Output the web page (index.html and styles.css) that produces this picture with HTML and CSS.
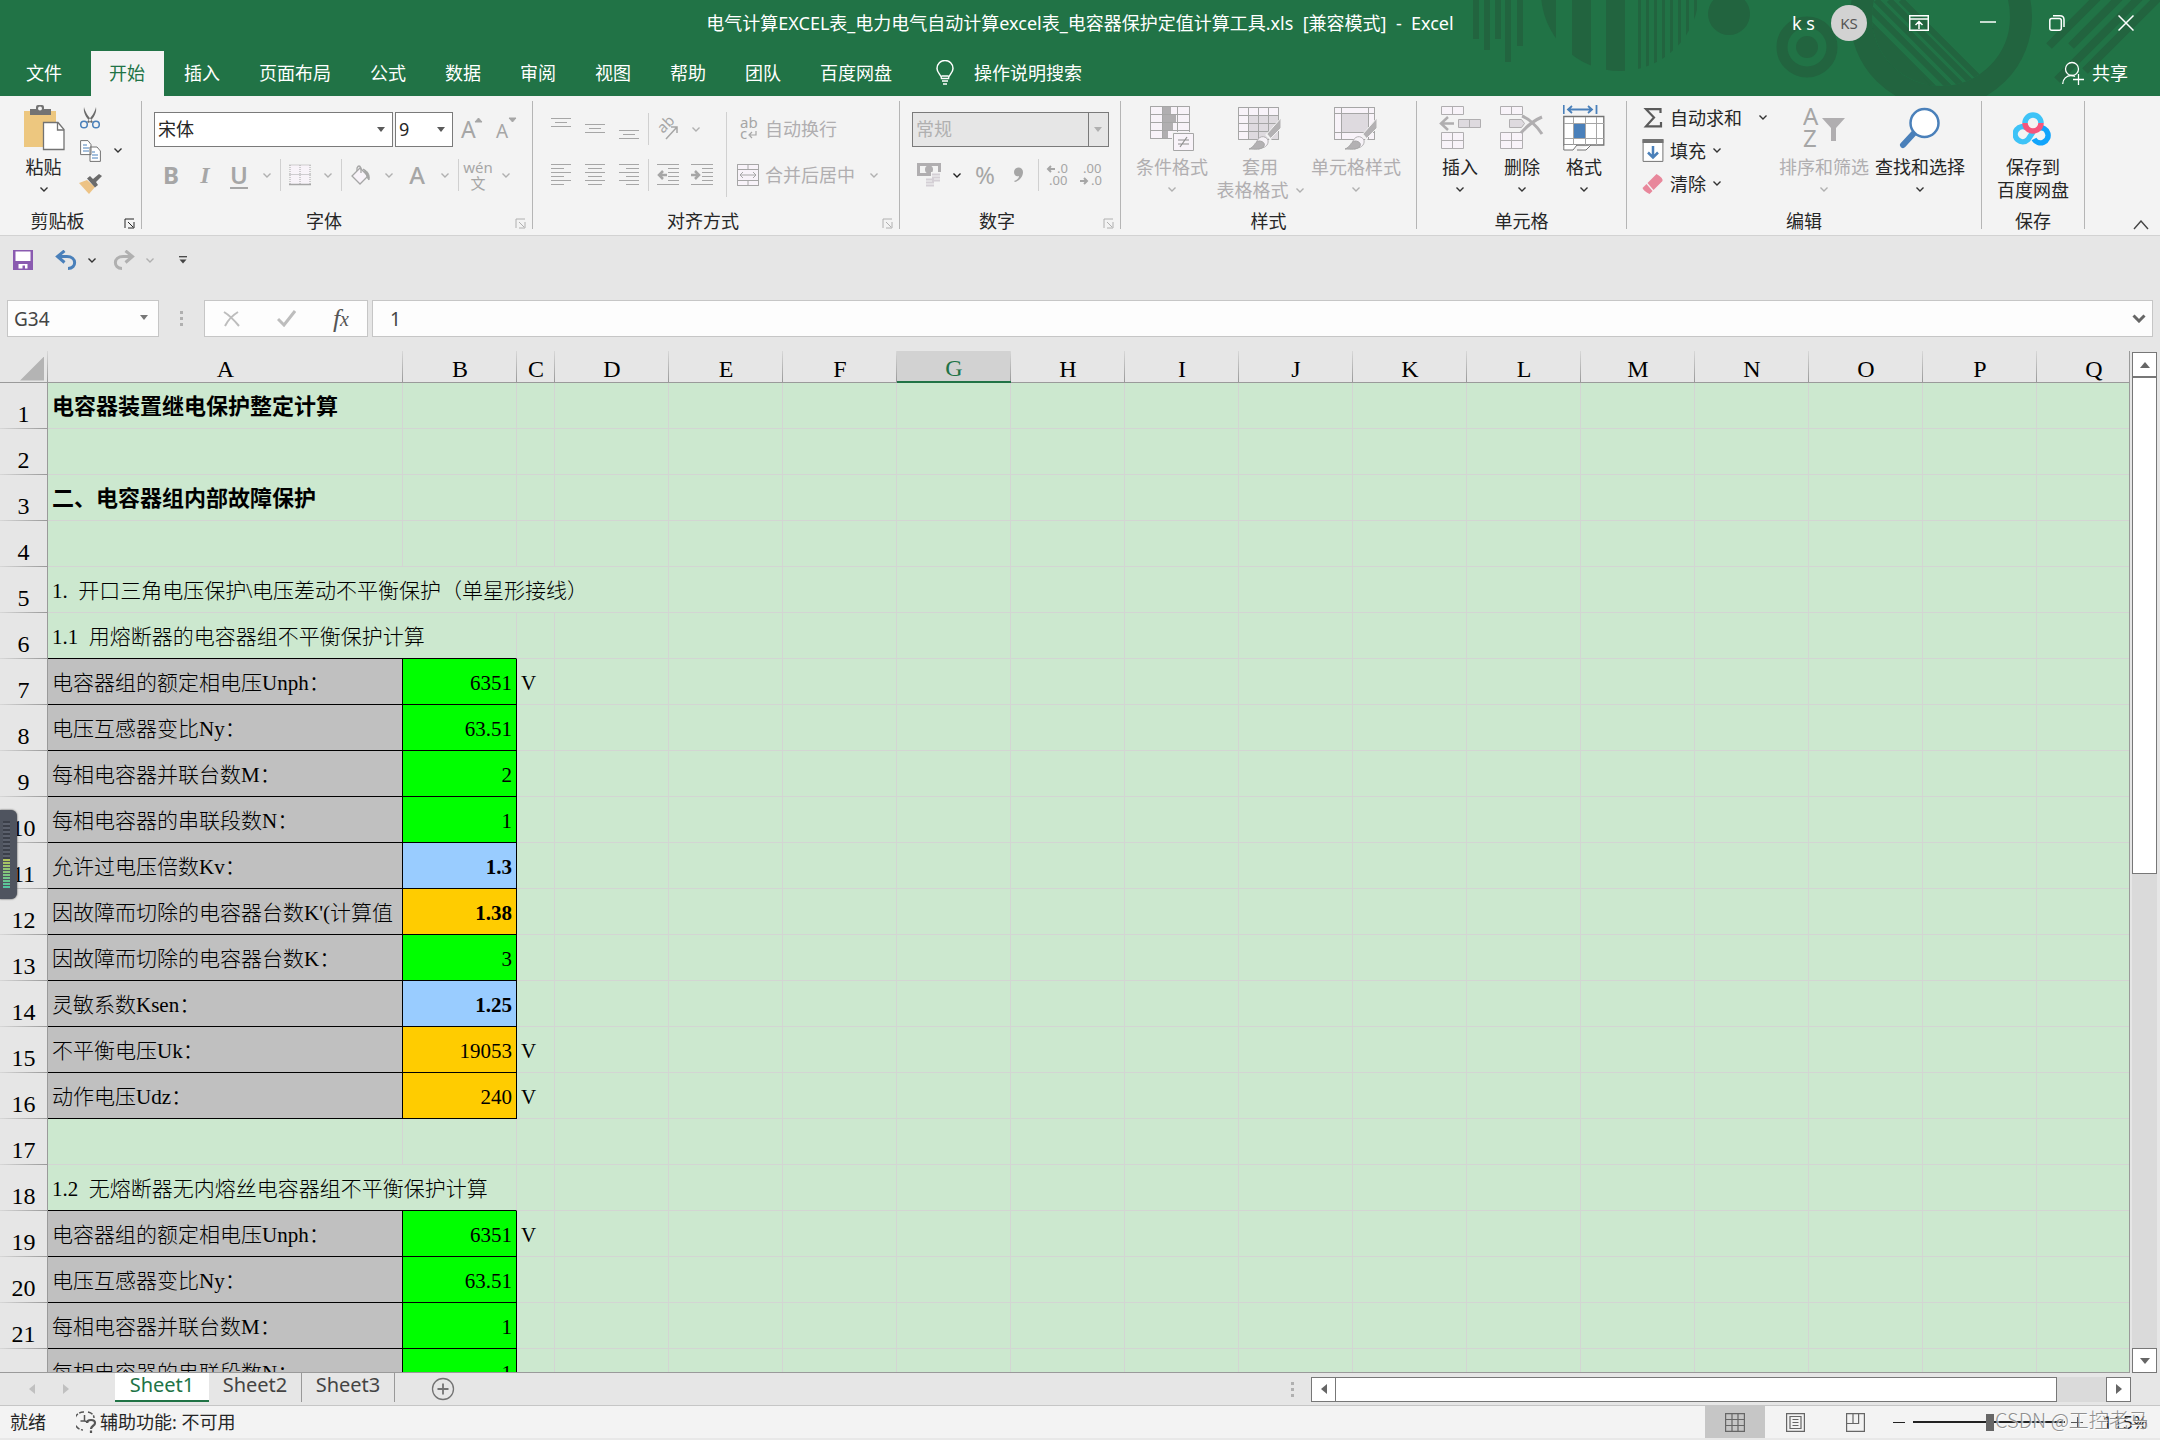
FILE: index.html
```html
<!DOCTYPE html>
<html lang="zh-CN">
<head>
    <meta charset="UTF-8">
    <title>电气计算EXCEL表 - Excel</title>
    <link rel="stylesheet" href="styles.css">
</head>
<body>
    <svg class="defs" aria-hidden="true">
        <symbol id="chevron" viewBox="0 0 8 5"><path d="M.5 .5 4 4 7.5 .5" fill="none" stroke="currentColor" stroke-width="1.4"/></symbol>
        <symbol id="launcher" viewBox="0 0 11 11"><path d="M1 10V1h9M4 4l5 5M10 4v6H4" fill="none" stroke="currentColor"/></symbol>
        <symbol id="brush" viewBox="0 0 34 34"><path d="M33 2v10L22 23l-4-4z" fill="#b3b1b3" stroke="#f3f3f3"/><path d="M18 18l5 6" stroke="#f3f3f3" stroke-width="2"/><path d="M8 28c2-9 9-9 12-4 1 6-4 8-10 9z" fill="#f6f2f7" stroke="#b3b1b3"/><path d="M1 33c6-2 5-7 10-8 5 0 7 4 4 6-3 3-8 2-14 2z" fill="#b3b1b3"/></symbol>
    </svg>

    <header class="app-header">
        <svg class="art" width="700" height="96" viewBox="1460 0 700 96" aria-hidden="true">
            <defs>
                <clipPath id="disc"><circle cx="1620" cy="-8" r="79"/></clipPath>
                <clipPath id="hole"><circle cx="1941" cy="17" r="69"/></clipPath>
            </defs>
            <g fill="#22643f">
                <path d="M1473 0h6v39h-6zM1484 0h6v50h-6zM1495 0h6v39h-6zM1505 0h6v62h-6zM1517 0h6v46h-6z"/>
                <path clip-path="url(#disc)" d="M1541 0h15v75h-15zM1572 0h19v75h-19zM1606 0h19v75h-19zM1638 0h3v75h-3zM1646 0h3v75h-3zM1654 0h3v75h-3zM1662 0h3v75h-3zM1670 0h3v75h-3zM1678 0h3v75h-3zM1686 0h3v75h-3zM1694 0h3v75h-3z"/>
                <circle cx="1729" cy="14" r="21"/>
                <circle cx="1807" cy="47" r="11"/>
            </g>
            <g fill="none" stroke="#22643f">
                <circle cx="1807" cy="47" r="25" stroke-width="11"/>
                <circle cx="1941" cy="17" r="80" stroke-width="22"/>
                <g clip-path="url(#hole)" stroke-width="6">
                    <path d="M1846 0l100 100M1862 0l100 100M1876 0l100 100M1889 0l100 100M1901 0l100 100"/>
                    <path d="M1866 30l66 66" stroke-width="14"/>
                </g>
                <path stroke-width="8" d="M2049 46l50-50M2071 46l50-50M2057 80l84-84M2085 71l76-76"/>
            </g>
        </svg>
        <div class="title-bar">
            <span></span>
            <h1>电气计算EXCEL表_电力电气自动计算excel表_电容器保护定值计算工具.xls&nbsp; [兼容模式]&nbsp; -&nbsp; Excel</h1>
            <div class="window-tools">
                <span class="user">k s</span>
                <span class="avatar">KS</span>
                <button aria-label="功能区显示选项"><svg width="20" height="16" viewBox="0 0 20 16"><path d="M.7.7h18.6v14.6H.7zM1 4h18M10 14V7M6.500 10 10 6.500l3.500 3.500" fill="none" stroke="#fff" stroke-width="1.500"/></svg></button>
                <button aria-label="最小化"><svg width="16" height="16" viewBox="0 0 16 16"><path d="M0 7h16" stroke="#fff" stroke-width="1.500"/></svg></button>
                <button aria-label="还原"><svg width="16" height="16" viewBox="0 0 16 16"><path d="M4 .8h7q4 0 4 4V12" fill="none" stroke="#fff" stroke-width="1.500"/><rect x=".8" y="3.500" width="11.500" height="11.700" rx="2" fill="none" stroke="#fff" stroke-width="1.500"/></svg></button>
                <button aria-label="关闭"><svg width="16" height="16" viewBox="0 0 16 16"><path d="M.5.5l15 15M15.500.5l-15 15" stroke="#fff" stroke-width="1.500"/></svg></button>
            </div>
        </div>
        <nav class="tabs">
            <a href="#file" class="file">文件</a>
            <a href="#home" class="active">开始</a>
            <a href="#insert">插入</a>
            <a href="#layout">页面布局</a>
            <a href="#formulas">公式</a>
            <a href="#data">数据</a>
            <a href="#review">审阅</a>
            <a href="#view">视图</a>
            <a href="#help">帮助</a>
            <a href="#team">团队</a>
            <a href="#netdisk">百度网盘</a>
            <a href="#tellme" class="tell-me">
                <svg width="18" height="25" viewBox="0 0 18 25"><path d="M5.500 18.500c0-4-4.500-5-4.500-10a8 8 0 0 1 16 0c0 5-4.500 6-4.500 10zM5.500 16h7M6 21h6M7 24h4" fill="none" stroke="#fff" stroke-width="1.500"/></svg>
                操作说明搜索
            </a>
            <a href="#share" class="share">
                <svg width="22" height="24" viewBox="0 0 22 24"><circle cx="10" cy="8" r="6.500" fill="none" stroke="#fff" stroke-width="1.300"/><path d="M.7 23c0-5 4-8.500 8.300-8.500 2 0 3 .3 4 1M16.500 13v11M11 18.500h11" fill="none" stroke="#fff" stroke-width="1.300"/></svg>
                共享
            </a>
        </nav>
    </header>

    <section class="ribbon">
        <div class="group clipboard">
            <div class="group-body">
                <button class="big paste">
                    <span class="icon"><svg width="42" height="46" viewBox="0 0 42 46"><path d="M1 6h32v36H1z" fill="#edc77f"/><path d="M7 10V4h6V2q0-2 2-2h4q2 0 2 2v2h7v6z" fill="#737373"/><circle cx="17" cy="3.500" r="2" fill="#f3f3f3"/><path d="M20.500 17.500H35l6 7v20H20.500z" fill="#fff" stroke="#737373" stroke-width="1.300"/><path d="M34.500 18v7H41" fill="none" stroke="#737373" stroke-width="1.300"/></svg></span>
                    粘贴
                    <svg class="chev"><use href="#chevron"/></svg>
                </button>
                <div class="stack">
                    <div class="row">
                        <button class="tool" aria-label="剪切"><svg width="20" height="22" viewBox="0 0 20 22"><path d="M4 0c1 5 4 9 9 15l-2 1C6 10 3 6 4 0zM16 0c-1 5-4 9-9 15l2 1C14 10 17 6 16 0z" fill="#6b6b6b"/><circle cx="4" cy="17.500" r="3.300" fill="none" stroke="#4a80ba" stroke-width="1.500"/><circle cx="16" cy="17.500" r="3.300" fill="none" stroke="#4a80ba" stroke-width="1.500"/></svg></button>
                    </div>
                    <div class="row">
                        <button class="tool" aria-label="复制"><svg width="21" height="22" viewBox="0 0 21 22"><path d="M.6.6H8l3 4v10H.6zM10 7h7l3.400 4v10.400H10z" fill="#fff" stroke="#737373"/><path d="M3 5h4M3 8h6M3 11h6M12 12h3M12 15h6M12 18h6" stroke="#4a80ba"/></svg></button>
                        <svg class="chev"><use href="#chevron"/></svg>
                    </div>
                    <div class="row">
                        <button class="tool" aria-label="格式刷"><svg width="23" height="20" viewBox="0 0 23 20"><path d="M0 9 8 6l8 7-6 7z" fill="#edc385"/><path d="M8 4.500 11 2l3 3 6-5 3 2-6 6 2 3-3 2.500z" fill="#6b6b6b"/></svg></button>
                    </div>
                </div>
            </div>
            <div class="group-label"><span>剪贴板</span><svg class="launch"><use href="#launcher"/></svg></div>
        </div>

        <div class="group font off">
            <div class="group-body rows">
                <div class="row">
                    <span class="combo font-name"><select aria-label="字体"><option>宋体</option></select></span>
                    <span class="combo font-size"><select aria-label="字号"><option>9</option></select></span>
                    <button class="tool" aria-label="增大字号"><svg width="22" height="24" viewBox="0 0 22 24"><text x="0" y="21" class="ic" font-size="23">A</text><path d="M14 5l3.500-4L21 5z" fill="#a6a6a6"/></svg></button>
                    <button class="tool" aria-label="减小字号"><svg width="22" height="24" viewBox="0 0 22 24"><text x="1" y="21" class="ic" font-size="19">A</text><path d="M14 1l3.500 4L21 1z" fill="#a6a6a6"/></svg></button>
                </div>
                <div class="row">
                    <button class="tool glyph bold">B</button>
                    <button class="tool glyph italic">I</button>
                    <button class="tool glyph under">U</button>
                    <svg class="chev"><use href="#chevron"/></svg>
                    <i class="sep"></i>
                    <button class="tool" aria-label="边框"><svg width="22" height="22" viewBox="0 0 22 22"><path d="M1 1h20v19H1z" fill="#f8f3f9" stroke="none"/><path d="M.5 1H22M.5 10.500H22M1 1v20M11 1v20M21 1v20" stroke="#a6a6a6" stroke-dasharray="1 1"/><path d="M0 20.500h22" stroke="#a6a6a6" stroke-width="1.500"/></svg></button>
                    <svg class="chev"><use href="#chevron"/></svg>
                    <i class="sep"></i>
                    <button class="tool" aria-label="填充颜色"><svg width="20" height="20" viewBox="0 0 20 20"><path d="M9 3 1 11l8 8 8-8z" fill="#f8f3f9" stroke="#a6a6a6" stroke-width="1.300"/><path d="M6 6V3q2-4 4 0v5" fill="none" stroke="#a6a6a6" stroke-width="1.300"/><path d="M12 4c5 2 7 6 6 11-2-1-2-6-6-11z" fill="#a6a6a6"/></svg></button>
                    <svg class="chev"><use href="#chevron"/></svg>
                    <button class="tool glyph color">A</button>
                    <svg class="chev"><use href="#chevron"/></svg>
                    <i class="sep"></i>
                    <button class="tool phonetic"><span>wén</span><span>文</span></button>
                    <svg class="chev"><use href="#chevron"/></svg>
                </div>
            </div>
            <div class="group-label"><span>字体</span><svg class="launch"><use href="#launcher"/></svg></div>
        </div>

        <div class="group align off">
            <div class="group-body">
                <div class="rows">
                    <div class="row">
                        <button class="tool" aria-label="顶端对齐"><svg width="20" height="22" viewBox="0 0 20 22"><path d="M0 .5h20M4 4.500h12M0 8.500h20"/></svg></button>
                        <button class="tool" aria-label="垂直居中"><svg width="20" height="22" viewBox="0 0 20 22"><path d="M0 6.500h20M4 10.500h12M0 14.500h20"/></svg></button>
                        <button class="tool" aria-label="底端对齐"><svg width="20" height="22" viewBox="0 0 20 22"><path d="M0 12.500h20M4 16.500h12M0 20.500h20"/></svg></button>
                        <i class="sep"></i>
                        <button class="tool" aria-label="方向"><svg width="22" height="22" viewBox="0 0 22 22"><text x="0" y="0" class="ic" font-size="15" transform="translate(6 16) rotate(-45)">ab</text><path d="M9 21 20 9M14 9h6v6" stroke-width="1.500"/></svg></button>
                        <svg class="chev"><use href="#chevron"/></svg>
                    </div>
                    <div class="row">
                        <button class="tool" aria-label="左对齐"><svg width="20" height="22" viewBox="0 0 20 22"><path d="M0 .5h20M0 4.500h13M0 8.500h20M0 12.500h13M0 16.500h20M0 20.500h13"/></svg></button>
                        <button class="tool" aria-label="居中"><svg width="20" height="22" viewBox="0 0 20 22"><path d="M0 .5h20M3 4.500h14M0 8.500h20M3 12.500h14M0 16.500h20M3 20.500h14"/></svg></button>
                        <button class="tool" aria-label="右对齐"><svg width="20" height="22" viewBox="0 0 20 22"><path d="M0 .5h20M7 4.500h13M0 8.500h20M7 12.500h13M0 16.500h20M7 20.500h13"/></svg></button>
                        <i class="sep"></i>
                        <button class="tool" aria-label="减少缩进量"><svg width="22" height="22" viewBox="0 0 22 22"><path d="M0 .5h22M11 4.500h11M11 8.500h11M11 12.500h11M11 16.500h11M0 20.500h22"/><path d="M10 11H2M6 7l-4 4 4 4" stroke-width="2.500"/></svg></button>
                        <button class="tool" aria-label="增加缩进量"><svg width="22" height="22" viewBox="0 0 22 22"><path d="M0 .5h22M11 4.500h11M11 8.500h11M11 12.500h11M11 16.500h11M0 20.500h22"/><path d="M0 11h8M4 7l4 4-4 4" stroke-width="2.500"/></svg></button>
                    </div>
                </div>
                <i class="sep tall"></i>
                <div class="rows">
                    <div class="row">
                        <button class="text-tool"><svg width="22" height="24" viewBox="0 0 22 24"><text x="3" y="11" class="ic" font-size="15">ab</text><text x="3" y="22" class="ic" font-size="15">c</text><path d="M19 14v4h-6M15 15l-3 3 3 3" stroke-width="1.200"/></svg>自动换行</button>
                    </div>
                    <div class="row">
                        <button class="text-tool"><svg width="22" height="22" viewBox="0 0 22 22"><path d="M.5.5h21v21H.5z" fill="#f8f3f9"/><path d="M.5.5h21v21H.5zM0 5.500h22M0 16.500h22M11 0v5.500M11 16.500V22M3 11h16M6 8l-3 3 3 3M16 8l3 3-3 3"/></svg>合并后居中</button>
                        <svg class="chev"><use href="#chevron"/></svg>
                    </div>
                </div>
            </div>
            <div class="group-label"><span>对齐方式</span><svg class="launch"><use href="#launcher"/></svg></div>
        </div>

        <div class="group number off">
            <div class="group-body rows">
                <div class="row">
                    <span class="combo disabled"><select aria-label="数字格式" disabled><option>常规</option></select></span>
                </div>
                <div class="row">
                    <button class="tool" aria-label="会计数字格式"><svg width="24" height="24" viewBox="0 0 24 24"><g stroke="none"><path d="M0 0h24v13H0z" fill="#b0aeb0"/><path d="M3 3h18v7H3z" fill="#f3f3f3"/><circle cx="12" cy="6.500" r="4" fill="#b0aeb0"/><path d="M14 9h10v12H8v-7h6z" fill="#f3f3f3"/></g><path d="M15 11.500h8M15 14.500h8M15 17.500h8M9 16.500h8M9 19.500h8M9 22.500h8" stroke="#d4cfd5" stroke-width="2"/></svg></button>
                    <svg class="chev dark"><use href="#chevron"/></svg>
                    <button class="tool glyph percent">%</button>
                    <button class="tool" aria-label="千位分隔样式"><svg width="12" height="16" viewBox="0 0 12 16"><path d="M1 5a4.500 4.500 0 1 1 9 0c0 5-4 9-8 10l-1-1c3-1 5-3 5-5-3 1-5-1-5-4z" fill="#a6a6a6" stroke="none"/></svg></button>
                    <i class="sep"></i>
                    <button class="tool" aria-label="增加小数位数"><svg width="24" height="24" viewBox="0 0 24 24"><text x="11" y="10" class="ic" font-size="13">.0</text><text x="3" y="22" class="ic" font-size="13">.00</text><path d="M9 6H2M5 3 2 6l3 3" stroke-width="2"/></svg></button>
                    <button class="tool" aria-label="减少小数位数"><svg width="24" height="24" viewBox="0 0 24 24"><text x="3" y="10" class="ic" font-size="13">.00</text><text x="11" y="22" class="ic" font-size="13">.0</text><path d="M0 18h7M4 15l3 3-3 3" stroke-width="2"/></svg></button>
                </div>
            </div>
            <div class="group-label"><span>数字</span><svg class="launch"><use href="#launcher"/></svg></div>
        </div>

        <div class="group styles off">
            <div class="group-body">
                <button class="big">
                    <span class="icon"><svg width="44" height="45" viewBox="0 0 44 45"><path d="M.5.5h39v32H.5z" fill="#f8f3f9"/><path d="M.5.5h39v32H.5zM0 8.500h40M0 16.500h40M0 24.500h40M12.500 0v33M27.500 0v33"/><path d="M13 1h8v7h-8zM13 9h13v7H13zM13 17h10v7H13zM13 25h5v7h-5z" fill="#b0aeb0" stroke="none"/><path d="M23.500 27.500h20v17h-20z" fill="#f8f3f9" stroke="#f3f3f3" stroke-width="3"/><path d="M23.500 27.500h20v17h-20z" fill="#f8f3f9"/><path d="M28 34h11M28 38h11M37 31l-7 10" stroke="#8f8f8f" stroke-width="1.200"/></svg></span>
                    条件格式
                    <svg class="chev"><use href="#chevron"/></svg>
                </button>
                <button class="big wide">
                    <span class="icon"><svg width="44" height="43" viewBox="0 0 44 43"><path d="M.5.5h40v32H.5z" fill="#f8f3f9"/><path d="M10 8h30v24H10z" fill="#dedadf" stroke="none"/><path d="M.5.5h40v32H.5zM0 8.500h40M0 16.500h40M0 24.500h40M10.500 0v33M20.500 0v33M30.500 0v33"/><use href="#brush" x="10" y="9" width="34" height="34"/></svg></span>
                    套用
                    <span class="line">表格格式<svg class="chev"><use href="#chevron"/></svg></span>
                </button>
                <button class="big wide">
                    <span class="icon"><svg width="44" height="43" viewBox="0 0 44 43"><path d="M.5.5h40v32H.5z" fill="#f8f3f9"/><path d="M7 7h27v18H7z" fill="#dedadf" stroke="none"/><path d="M.5.5h40v32H.5zM0 6.500h40M0 25.500h40M7.500 0v33M34.500 0v33"/><use href="#brush" x="10" y="9" width="34" height="34"/></svg></span>
                    单元格样式
                    <svg class="chev"><use href="#chevron"/></svg>
                </button>
            </div>
            <div class="group-label"><span>样式</span></div>
        </div>

        <div class="group cells">
            <div class="group-body">
                <button class="big">
                    <span class="icon"><svg width="44" height="44" viewBox="0 0 44 44" fill="#f8f3f9" stroke="#b0aeb0"><path d="M3.500.5h22v8h-22zM14.500.5v8M3.500 26.500h22v16h-22zM3.500 34.500h22M14.500 26.500v16"/><path d="M20.500 13.500h22v8h-22zM31.500 13.500v8" fill="#dedadf"/><path d="M16 17.500H3M10 11l-7 6.500 7 6.500" fill="none" stroke-width="2.500"/></svg></span>
                    插入
                    <svg class="chev"><use href="#chevron"/></svg>
                </button>
                <button class="big">
                    <span class="icon"><svg width="44" height="44" viewBox="0 0 44 44" fill="#f8f3f9" stroke="#b0aeb0"><path d="M.5.5h22v8h-22zM11.500.5v8M.5 26.500h22v16h-22zM.5 34.500h22M11.500 26.500v16"/><path d="M9.500 13.500h12l3 4-3 4h-12z" fill="#dedadf"/><path d="M22 10c6 2 15 10 20 18M42 11c-7 3-15 9-21 16" fill="none" stroke-width="3"/></svg></span>
                    删除
                    <svg class="chev"><use href="#chevron"/></svg>
                </button>
                <button class="big">
                    <span class="icon"><svg width="42" height="46" viewBox="0 0 42 46"><path d="M.8 11.500h40V40H.8z" fill="#fff" stroke="#737373" stroke-width="1.300"/><path d="M1 18.500h40M1 33.500h40M10.500 12v28M22.500 12v28M33.500 12v28" stroke="#a6a6a6"/><path d="M11 19h11v14H11z" fill="#4a80ba"/><path d="M.8 40v5H10l4-5M14 45h9l5-5" fill="#fff" stroke="#737373"/><path d="M.7 0v9M33.500 0v9M5 4.500h24M9 1 5 4.500 9 8M25 1l4 3.500L25 8" fill="none" stroke="#4a80ba" stroke-width="1.800"/></svg></span>
                    格式
                    <svg class="chev"><use href="#chevron"/></svg>
                </button>
            </div>
            <div class="group-label"><span>单元格</span></div>
        </div>

        <div class="group edit">
            <div class="group-body">
                <div class="stack edit-list">
                    <div class="row">
                        <button class="text-tool"><svg width="18" height="20" viewBox="0 0 18 20"><path d="M16.500 5V1.200H2L10 9.500 2 18.300h15V14" fill="none" stroke="#5a5a5a" stroke-width="2.200"/></svg>自动求和</button>
                        <svg class="chev far"><use href="#chevron"/></svg>
                    </div>
                    <div class="row">
                        <button class="text-tool"><svg width="21" height="23" viewBox="0 0 21 23"><path d="M.6.6h19.800v21.800H.6z" fill="#fff" stroke="#737373"/><path d="M0 0h21v4H0z" fill="#737373"/><path d="M10.500 7v11M5.500 13.500l5 5 5-5" fill="none" stroke="#4a80ba" stroke-width="2.500"/></svg>填充</button>
                        <svg class="chev"><use href="#chevron"/></svg>
                    </div>
                    <div class="row">
                        <button class="text-tool"><svg width="21" height="20" viewBox="0 0 21 20"><path d="M14 0q7 4 6 7L11 16 5 9zM4 10l6 7-3 3Q1 17 0 14z" fill="#e8879b"/></svg>清除</button>
                        <svg class="chev"><use href="#chevron"/></svg>
                    </div>
                </div>
                <button class="big wide off">
                    <span class="icon"><svg width="42" height="42" viewBox="0 0 42 42"><text x="0" y="18" class="ic" font-size="24">A</text><text x="0" y="40" class="ic" font-size="24">Z</text><path d="M19 11h23L33 21v13h-5V21z" fill="#b0aeb0" stroke="none"/></svg></span>
                    排序和筛选
                    <svg class="chev"><use href="#chevron"/></svg>
                </button>
                <button class="big wide">
                    <span class="icon"><svg width="42" height="42" viewBox="0 0 42 42"><path d="M16 25 4 38" stroke="#4a80ba" stroke-width="6" stroke-linecap="round"/><circle cx="25.500" cy="16" r="14" fill="#fff" stroke="#4a80ba" stroke-width="2.500"/></svg></span>
                    查找和选择
                    <svg class="chev"><use href="#chevron"/></svg>
                </button>
            </div>
            <div class="group-label"><span>编辑</span></div>
        </div>

        <div class="group save">
            <div class="group-body">
                <button class="big">
                    <span class="icon"><svg width="40" height="36" viewBox="0 0 40 36" fill="none" stroke-width="5.500"><path d="M20 22 15 29.500a7.500 7.500 0 1 1-1-11.500" stroke="#3ec3f7"/><path d="M21 29a7.500 7.500 0 1 0 5-11" stroke="#12a4fb"/><path d="M12 13a8 8 0 0 1 16 0" stroke="#3ec3f7"/><path d="M12 13a8 8 0 0 0 16 0" stroke="#f6557c"/></svg></span>
                    保存到
                    <span class="line">百度网盘</span>
                </button>
            </div>
            <div class="group-label"><span>保存</span></div>
        </div>
        <button class="collapse" aria-label="折叠功能区"><svg width="16" height="10" viewBox="0 0 16 10"><path d="M1 9l7-8 7 8" fill="none" stroke="#444" stroke-width="1.400"/></svg></button>
    </section>

    <div class="quick-bar">
        <button aria-label="保存"><svg width="20" height="20" viewBox="0 0 20 20"><path d="M0 0h20v20H0z" fill="#8a5bb0"/><path d="M2.500 1.500h15v9.500h-15zM5.500 14h9v4.500H12v-3H9.500v3h-4z" fill="#fff"/></svg></button>
        <button aria-label="撤消"><svg width="22" height="20" viewBox="0 0 22 20"><path d="M3 6.500h9c10 0 10 12 1 12" fill="none" stroke="#4a80ba" stroke-width="3"/><path d="M9.500.8 2.500 6.500l7 6" fill="none" stroke="#4a80ba" stroke-width="3"/></svg></button>
        <svg class="chev dark"><use href="#chevron"/></svg>
        <button aria-label="恢复"><svg width="22" height="20" viewBox="0 0 22 20"><path d="M19 6.500h-9c-10 0-10 12-1 12" fill="none" stroke="#b0b0b0" stroke-width="3"/><path d="M12.500.8l7 5.700-7 6" fill="none" stroke="#b0b0b0" stroke-width="3"/></svg></button>
        <svg class="chev pale"><use href="#chevron"/></svg>
        <button aria-label="自定义快速访问工具栏"><svg width="8" height="8" viewBox="0 0 8 8"><path d="M0 .7h8" stroke="#444" stroke-width="1.300"/><path d="M.5 3.500h7L4 7.500z" fill="#444"/></svg></button>
    </div>

    <div class="formula-bar">
        <span class="combo name-box"><input type="text" value="G34" aria-label="名称框"></span>
        <i class="dots"></i>
        <div class="fx-box">
            <button aria-label="取消"><svg width="17" height="16" viewBox="0 0 17 16"><path d="M1 1c5 3 10 8 15 14M15 1C10 4 5 9 2 15" fill="none" stroke="#bdbdbd" stroke-width="2"/></svg></button>
            <button aria-label="输入"><svg width="19" height="17" viewBox="0 0 19 17"><path d="M1 9l6 6L18 1" fill="none" stroke="#bdbdbd" stroke-width="3"/></svg></button>
            <button class="fx">f<small>x</small></button>
        </div>
        <div class="formula">
            <input type="text" value="1" aria-label="编辑栏">
            <svg width="14" height="9" viewBox="0 0 14 9"><path d="M1.500 1.500 7 7l5.500-5.500" fill="none" stroke="#666" stroke-width="3"/></svg>
        </div>
    </div>

    <main class="workspace">
        <div class="sheet">
            <table>
                <colgroup id="cols"></colgroup>
                <thead><tr id="colHeads"></tr></thead>
                <tbody id="cells"></tbody>
            </table>
        </div>
        <div class="v-scroll">
            <button aria-label="向上滚动"><i class="tri up"></i></button>
            <div class="thumb"></div>
            <button aria-label="向下滚动"><i class="tri down"></i></button>
        </div>
        <div class="meter"><i class="level idle"></i><i class="level live"></i></div>
    </main>

    <div class="sheet-bar">
        <div class="sheet-nav"><i class="tri left"></i><i class="tri right"></i></div>
        <nav class="sheet-tabs">
            <a href="#sheet1" class="active">Sheet1</a>
            <a href="#sheet2">Sheet2</a>
            <a href="#sheet3">Sheet3</a>
        </nav>
        <button class="add" aria-label="新工作表"><svg width="24" height="24" viewBox="0 0 24 24"><circle cx="12" cy="12" r="10.500" fill="none" stroke="#737373" stroke-width="1.300"/><path d="M12 6.500v11M6.500 12h11" stroke="#737373" stroke-width="1.800"/></svg></button>
        <i class="dots"></i>
        <div class="h-scroll">
            <button aria-label="向左滚动"><i class="tri left"></i></button>
            <div class="thumb"></div>
            <button aria-label="向右滚动"><i class="tri right"></i></button>
        </div>
    </div>

    <footer class="status-bar">
        <span class="ready">就绪</span>
        <svg width="22" height="22" viewBox="0 0 22 22"><path d="M8 1A9 9 0 0 0 7 19M12 1c4 1 6 3 6 6" fill="none" stroke="#555" stroke-width="1.500" stroke-dasharray="5 1.500"/><path d="M8.500 4v6h-4M8.500 10l4 1" fill="none" stroke="#555" stroke-width="1.500"/><path d="M11 12c0-4 8-4 8 0 0 3-4 2.500-4 6M15 19.500V22" fill="none" stroke="#555" stroke-width="2.200"/></svg>
        <span>辅助功能: 不可用</span>
        <div class="views">
            <button class="active" aria-label="普通"><svg width="20" height="19" viewBox="0 0 20 19"><path d="M.6.6h18.800v17.800H.6zM0 6.500h20M0 12.500h20M7 0v19M13 0v19" fill="none" stroke="#666" stroke-width="1.200"/></svg></button>
            <button aria-label="页面布局"><svg width="19" height="19" viewBox="0 0 19 19"><path d="M.6.6h17.800v17.800H.6zM4 3.500h11v12H4zM6.500 6.500h6M6.500 9.500h6M6.500 12.500h6" fill="none" stroke="#666" stroke-width="1.200"/></svg></button>
            <button aria-label="分页预览"><svg width="19" height="19" viewBox="0 0 19 19"><path d="M.6.6h17.800v17.800H.6zM.6 10.500h12V.6M7 .6v9.900" fill="none" stroke="#666" stroke-width="1.200"/></svg></button>
        </div>
        <div class="zoom">
            <button aria-label="缩小"><svg width="12" height="12"><path d="M0 6.500h12" stroke="#222"/></svg></button>
            <input type="range" min="0" max="100" value="51" aria-label="显示比例">
            <button aria-label="放大"><svg width="12" height="12"><path d="M0 6.500h12M6.500 1v11" stroke="#555"/></svg></button>
            <span class="percent">115%</span>
            <span class="watermark">CSDN @工控老马</span>
        </div>
    </footer>

    <script>
        const columns = 'ABCDEFGHIJKLMNOPQ'.split('');
        const widths = { A: 355, C: 38 };
        const selected = 'G';

        // 每行: a/b/c 列内容, span 为 A 列文字占用的列数
        const rows = [
            { a: '电容器装置继电保护整定计算', title: true },
            {},
            { a: '二、电容器组内部故障保护', title: true },
            {},
            { a: '1.\u2002开口三角电压保护\\电压差动不平衡保护（单星形接线）', span: 4 },
            { a: '1.1\u2002用熔断器的电容器组不平衡保护计算', span: 2, edge: true },
            { a: '电容器组的额定相电压Unph：', b: '6351', c: 'V', fill: 'green' },
            { a: '电压互感器变比Ny：', b: '63.51', fill: 'green' },
            { a: '每相电容器并联台数M：', b: '2', fill: 'green' },
            { a: '每相电容器的串联段数N：', b: '1', fill: 'green' },
            { a: '允许过电压倍数Kv：', b: '1.3', fill: 'blue' },
            { a: "因故障而切除的电容器台数K'(计算值", b: '1.38', fill: 'orange strong' },
            { a: '因故障而切除的电容器台数K：', b: '3', fill: 'green' },
            { a: '灵敏系数Ksen：', b: '1.25', fill: 'blue' },
            { a: '不平衡电压Uk：', b: '19053', c: 'V', fill: 'orange' },
            { a: '动作电压Udz：', b: '240', c: 'V', fill: 'orange' },
            {},
            { a: '1.2\u2002无熔断器无内熔丝电容器组不平衡保护计算', span: 2, edge: true },
            { a: '电容器组的额定相电压Unph：', b: '6351', c: 'V', fill: 'green' },
            { a: '电压互感器变比Ny：', b: '63.51', fill: 'green' },
            { a: '每相电容器并联台数M：', b: '1', fill: 'green' },
            { a: '每相电容器的串联段数N：', b: '1', fill: 'green' }
        ];

        document.getElementById('cols').innerHTML = '<col style="width:48px">' +
            columns.map(c => `<col style="width:${widths[c] || 114}px">`).join('');

        document.getElementById('colHeads').innerHTML = '<th class="corner"><i></i></th>' +
            columns.map(c => `<th scope="col"${c === selected ? ' class="selected"' : ''}>${c}</th>`).join('');

        document.getElementById('cells').innerHTML = rows.map((row, i) => {
            const span = row.span || 1;
            let html = `<th scope="row">${i + 1}</th>`;
            if (row.fill) {
                html += `<td class="label">${row.a}</td><td class="value ${row.fill}">${row.b}</td>`;
            } else {
                const cls = (row.title ? 'title' : '') + (row.edge ? ' edge' : '');
                html += `<td class="${cls}" colspan="${span}">${row.a || ''}</td>`;
            }
            const used = row.fill ? 2 : span;
            for (let c = used; c < columns.length; c++) {
                html += `<td>${c === 2 && row.c ? row.c : ''}</td>`;
            }
            return `<tr>${html}</tr>`;
        }).join('');
    </script>
</body>
</html>
```
FILE: styles.css
```css
/* base */
* {
    box-sizing: border-box;
}

body {
    margin: 0;
    height: 100vh;
    display: flex;
    flex-direction: column;
    overflow: hidden;
    background: #e6e6e6;
    color: #262626;
    font-family: "Noto Sans", "Noto Sans CJK SC", sans-serif;
    font-size: 18px;
    line-height: 24px;
}

button {
    font: inherit;
    color: inherit;
    background: none;
    border: none;
    padding: 0;
    cursor: pointer;
    display: flex;
    align-items: center;
    justify-content: center;
}

a {
    color: inherit;
    text-decoration: none;
}

svg {
    flex: none;
}

.defs {
    position: absolute;
    width: 0;
    height: 0;
}

/* header */
.app-header {
    position: relative;
    background: #217346;
    color: #fff;
    height: 96px;
    flex: none;
}

.art {
    position: absolute;
    right: 0;
    top: 0;
}

.title-bar,
.tabs {
    position: relative;
}

.title-bar {
    display: grid;
    grid-template-columns: 1fr auto 1fr;
    align-items: center;
    height: 46px;
    margin-bottom: 5px;
}

.title-bar h1 {
    margin: 0;
    font-size: 18px;
    font-weight: 400;
}

.window-tools {
    display: flex;
    align-items: center;
    justify-content: flex-end;
}

.window-tools button {
    width: 69px;
    height: 46px;
}

.avatar {
    width: 36px;
    height: 36px;
    margin: 0 17px 0 16px;
    border-radius: 50%;
    background: #d2d2d2;
    color: #555;
    font-size: 15px;
    line-height: 36px;
    text-align: center;
}

.tabs {
    display: flex;
    gap: 1px;
    height: 45px;
}

.tabs a {
    display: flex;
    align-items: center;
    padding: 0 19px 2px;
}

.tabs .file {
    width: 90px;
    padding-left: 26px;
}

.tabs .active {
    width: 73px;
    padding-left: 18px;
    background: #f3f3f3;
    color: #217346;
}

.tabs .tell-me {
    gap: 20px;
    padding-left: 24px;
}

.tabs .share {
    gap: 8px;
    margin-left: auto;
    padding-right: 32px;
}

/* ribbon */
.ribbon {
    display: flex;
    flex: none;
    height: 140px;
    padding: 5px 0;
    background: #f3f3f3;
    border-bottom: 1px solid #d2d2d2;
}

.group {
    display: flex;
    flex-direction: column;
    flex: none;
    height: 128px;
    border-right: 1px solid #b5b5b5;
}

.group-body {
    display: flex;
    flex: none;
    height: 108px;
}

.group-label {
    display: flex;
    align-items: center;
    height: 24px;
    line-height: 24px;
}

.group-label span {
    flex: 1;
    text-align: center;
}

.launch {
    width: 11px;
    height: 11px;
    margin: 4px 6px 0 9px;
}

.clipboard { width: 142px; }
.font { width: 391px; }
.align { width: 367px; }
.number { width: 221px; }
.styles { width: 296px; }
.cells { width: 210px; }
.edit { width: 355px; }
.save { width: 103px; }

.clipboard .group-body { padding-left: 14px; }
.font .group-body { padding: 11px 0 0 12px; }
.align .group-body { padding: 11px 0 0 11px; }
.number .group-body { padding: 11px 0 0 12px; }
.styles .group-body { padding-left: 11px; }
.cells .group-body { padding-left: 12px; }
.edit .group-body { padding-left: 15px; }
.save .group-body { justify-content: center; }

.rows {
    display: flex;
    flex-direction: column;
    gap: 12px;
}

.row {
    display: flex;
    align-items: center;
    height: 34px;
}

.stack .row {
    height: 33px;
}

.tool {
    width: 34px;
    height: 34px;
    flex: none;
}

.tool svg {
    overflow: visible;
}

.chev {
    width: 8px;
    height: 5px;
    margin: 0 7px;
    color: #333;
}

.sep {
    width: 1px;
    height: 32px;
    margin: 0 2px;
    background: #d0d0d0;
}

.sep.tall {
    height: 85px;
    margin: 0 10px 0 7px;
}

.align .rows:first-child {
    width: 175px;
}

.off .group-body,
.big.off {
    color: #b0aeb0;
}

.off .chev,
.font .launch,
.align .launch,
.number .launch {
    color: #b0b0b0;
}

.off .chev.dark {
    color: #222;
}

.off .group-body svg,
.big.off svg {
    stroke: #a6a6a6;
    fill: none;
}

.ic {
    fill: #a6a6a6;
    stroke: none;
}

.glyph {
    font-size: 24px;
    line-height: 32px;
    color: #a6a6a6;
}

.bold { font-weight: 700; }
.italic { font-family: "Liberation Serif", serif; font-style: italic; font-weight: 700; }
.under { font-weight: 600; text-decoration: underline; text-underline-offset: 3px; }
.color { font-weight: 500; }

.phonetic {
    flex-direction: column;
    font-size: 15px;
    line-height: 16px;
    color: #a6a6a6;
}

.text-tool {
    gap: 6px;
    white-space: nowrap;
}

.text-tool svg {
    width: 22px;
    overflow: visible;
}

.align .text-tool {
    margin-right: 8px;
}

.big {
    flex-direction: column;
    justify-content: flex-start;
    width: 62px;
    white-space: nowrap;
}

.big.wide {
    width: 96px;
}

.big .icon {
    display: flex;
    align-items: center;
    justify-content: center;
    height: 54px;
}

.big > .chev {
    margin-top: 8px;
}

.big .line {
    display: flex;
    align-items: center;
    line-height: 22px;
}

.big .line .chev {
    margin: 0 0 0 7px;
}

.paste {
    width: 59px;
}

.styles .big:first-child {
    width: 80px;
}

.edit-list {
    width: 134px;
}

.edit-list .chev.far {
    margin-left: 17px;
}

.collapse {
    align-self: flex-end;
    margin: 0 11px 0 auto;
}

/* combo */
.combo {
    position: relative;
    display: flex;
    height: 35px;
    border: 1px solid #7a7a7a;
    background: #fff;
}

.combo::after {
    content: "";
    position: absolute;
    right: 7px;
    top: 14px;
    border: 4px solid transparent;
    border-top: 5px solid #5a5a5a;
    border-bottom: none;
}

.combo select,
.combo input {
    appearance: none;
    width: 100%;
    border: none;
    outline: none;
    background: none;
    padding: 0 3px;
    font: inherit;
    color: #262626;
}

.font-name { width: 239px; margin-right: 2px; }
.font-size { width: 58px; margin-right: 2px; }

.combo.disabled {
    width: 197px;
    background: linear-gradient(#7a7a7a, #7a7a7a) right 19px top / 1px 100% no-repeat #e6e6e6;
}

.combo.disabled select {
    color: #b0b0b0;
    opacity: 1;
}

.combo.disabled::after {
    right: 6px;
    border-top-color: #b0b0b0;
}

/* quick access */
.quick-bar {
    display: flex;
    align-items: center;
    flex: none;
    height: 48px;
    padding-left: 13px;
}

.quick-bar button:first-child {
    margin-right: 22px;
}

.quick-bar .chev {
    margin: 0 17px 0 11px;
}

.quick-bar .pale {
    color: #b0b0b0;
    margin-right: 25px;
}

/* formula bar */
.formula-bar {
    display: flex;
    flex: none;
    height: 37px;
    margin: 16px 7px 14px;
}

.formula-bar .combo,
.fx-box,
.formula {
    height: 37px;
    background: #fdfdfd;
    border: 1px solid #c6c6c6;
}

.formula-bar input {
    font-size: 19px;
    color: #444;
}

.name-box {
    width: 152px;
}

.name-box input {
    padding-left: 6px;
}

.name-box::after {
    right: 10px;
    border-top-color: #777;
}

.dots {
    width: 3px;
    height: 15px;
    margin: auto 21px;
    background: repeating-linear-gradient(#b0b0b0 0 3px, transparent 3px 6px);
}

.fx-box {
    display: flex;
    align-items: center;
    justify-content: space-between;
    width: 164px;
    padding: 0 18px;
    margin-right: 4px;
}

.fx {
    font-family: "Liberation Serif", serif;
    font-style: italic;
    font-size: 26px;
    color: #555;
}

.fx small {
    font-size: 20px;
}

.formula {
    display: flex;
    align-items: center;
    flex: 1;
    padding: 0 6px 0 17px;
}

.formula input {
    flex: 1;
    border: none;
    outline: none;
    background: none;
    padding: 0;
    font-family: inherit;
}

/* sheet */
.workspace {
    position: relative;
    display: flex;
    flex: 1;
    min-height: 0;
}

.sheet {
    flex: 1;
    min-width: 0;
    overflow: hidden;
    border-right: 1px solid #9a9a9a;
    border-bottom: 1px solid #9a9a9a;
}

.sheet table {
    width: 2151px;
    table-layout: fixed;
    border-collapse: separate;
    border-spacing: 0;
    font-family: "Liberation Serif", "Noto Sans CJK SC", serif;
    font-size: 21px;
    line-height: 24px;
    color: #000;
}

.sheet th {
    padding: 0;
    font-size: 24px;
    font-weight: 400;
}

.sheet thead th {
    height: 32px;
    padding-top: 4px;
    border-bottom: 1px solid #9a9a9a;
    background: linear-gradient(#d8d8d8, #999) right / 1px 100% no-repeat #e6e6e6;
}

.sheet thead .selected {
    background-color: #d2d2d2;
    border-bottom: 2px solid #217346;
    color: #217346;
}

.sheet tbody th {
    height: 46px;
    padding-bottom: 3px;
    vertical-align: bottom;
    border-right: 1px solid #9a9a9a;
    background: linear-gradient(to right, #d8d8d8, #999) bottom / 100% 1px no-repeat #e6e6e6;
}

.corner i {
    display: block;
    width: 24px;
    height: 24px;
    margin-left: 20px;
    background: #b4b4b4;
    clip-path: polygon(100% 0, 100% 100%, 0 100%);
}

.sheet td {
    height: 46px;
    padding: 2px 4px 0;
    background: #cce8cf;
    border-right: 1px solid #d3d5d3;
    border-bottom: 1px solid #d3d5d3;
    white-space: nowrap;
    overflow: hidden;
    font-weight: 300;
}

.sheet td.title {
    font-size: 22px;
    font-weight: 700;
}

.sheet td.edge {
    border-bottom-color: #000;
}

.sheet td.label {
    background: #c0c0c0;
    border-color: #000;
}

.sheet td.value {
    border-color: #000;
    text-align: right;
}

.sheet td.green { background: #0f0; }
.sheet td.blue { background: #9cf; font-weight: 700; }
.sheet td.orange { background: #fc0; }
.sheet td.strong { font-weight: 700; }

/* volume meter */
.meter {
    position: absolute;
    left: 0;
    top: 459px;
    width: 17px;
    height: 89px;
    padding: 11px 0 0 3px;
    border-radius: 0 6px 6px 0;
    background: #4f545f;
    box-shadow: 0 0 2px #333;
}

.level {
    display: block;
    width: 7px;
}

.level.idle {
    height: 38px;
    background: repeating-linear-gradient(#3b3f49 0 2px, #5b606c 2px 4px);
}

.level.live {
    height: 30px;
    background: repeating-linear-gradient(transparent 0 2px, #4f545f 2px 3px), linear-gradient(#b5c45a, #4cc7a5);
}

/* scrollbars */
.tri {
    display: block;
    border: 5px solid transparent;
}

.tri.up { border-bottom: 6px solid #666; border-top: none; }
.tri.down { border-top: 6px solid #666; border-bottom: none; }
.tri.left { border-right: 6px solid #666; border-left: none; }
.tri.right { border-left: 6px solid #666; border-right: none; }

.v-scroll {
    display: flex;
    flex-direction: column;
    width: 25px;
    margin: 1px 3px 0 2px;
    background: #dadada;
}

.v-scroll button,
.h-scroll button {
    width: 25px;
    height: 25px;
    border: 1px solid #777;
    background: #fff;
}

.v-scroll .thumb {
    height: 497px;
    margin-bottom: auto;
    border: 1px solid #777;
    background: #fff;
}

.sheet-bar {
    display: flex;
    flex: none;
    align-items: center;
    height: 33px;
    padding-right: 29px;
    border-bottom: 1px solid #c6c6c6;
}

.sheet-nav {
    display: flex;
    gap: 28px;
    width: 115px;
    padding-left: 29px;
}

.sheet-nav .tri.left { border-right-color: #c0c0c0; }
.sheet-nav .tri.right { border-left-color: #c0c0c0; }

.sheet-tabs {
    display: flex;
    align-self: flex-start;
    font-size: 20px;
    line-height: 24px;
    color: #444;
}

.sheet-tabs a {
    width: 93px;
    height: 29px;
    border-right: 1px solid #999;
    text-align: center;
}

.sheet-tabs .active {
    width: 94px;
    background: #fff;
    color: #217346;
    border-right: none;
    border-bottom: 2px solid #217346;
}

.add {
    margin-left: 36px;
}

.sheet-bar .dots {
    margin: auto 17px auto auto;
}

.h-scroll {
    display: flex;
    width: 820px;
    background: #dadada;
}

.h-scroll .thumb {
    flex: 1;
    margin-right: 49px;
    border: 1px solid #777;
    border-left: none;
    background: #fff;
}

/* status bar */
.status-bar {
    display: flex;
    align-items: center;
    flex: none;
    height: 34px;
    padding-left: 10px;
    background: #f3f3f3;
    border-bottom: 2px solid #e8e8e8;
}

.ready {
    margin-right: 30px;
}

.status-bar svg + span {
    margin-left: 2px;
}

.views {
    display: flex;
    align-self: stretch;
    margin-left: auto;
}

.views button {
    width: 60px;
}

.views .active {
    background: #c6c6c6;
}

.zoom {
    position: relative;
    display: flex;
    align-items: center;
    width: 275px;
    padding-left: 8px;
}

.zoom input {
    appearance: none;
    width: 152px;
    height: 17px;
    margin: 0 6px 0 8px;
    background: linear-gradient(#222, #222) center / 100% 2px no-repeat;
}

.zoom input::-webkit-slider-thumb {
    appearance: none;
    width: 8px;
    height: 17px;
    background: #666;
}

.zoom .percent {
    margin-left: auto;
    margin-right: 12px;
}

.watermark {
    position: absolute;
    left: 110px;
    top: -2px;
    font-family: "Noto Sans CJK SC", sans-serif;
    font-size: 20px;
    font-weight: 300;
    white-space: nowrap;
    color: #909090;
    text-shadow: 1px 1px 1px #fff;
}
```
